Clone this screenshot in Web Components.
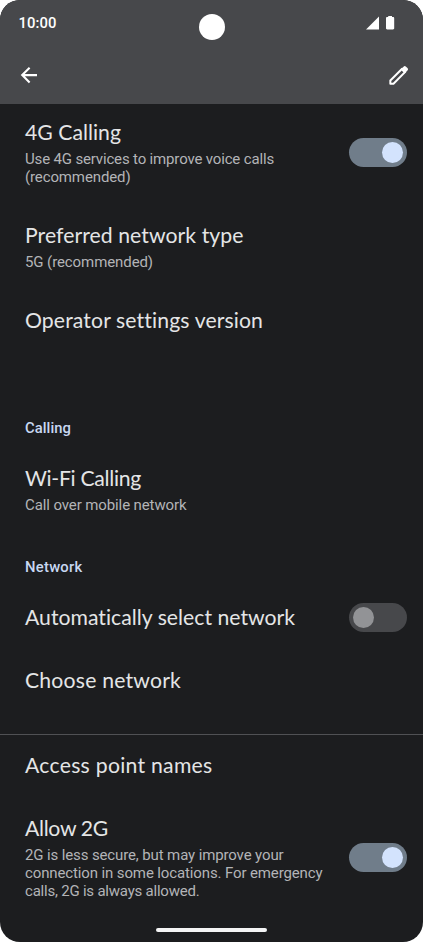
<!DOCTYPE html>
<html lang="en">
<head>
<meta charset="utf-8">
<title>Mobile network</title>
<style>
html,body{margin:0;background:#fff}
</style>
</head>
<body>
<phone-screen>
  <status-bar slot="top"></status-bar>
  <app-bar slot="top"></app-bar>
  <setting-item toggle="on"><fit-text w="96">4G Calling</fit-text>
    <fit-text slot="note" w="249">Use 4G services to improve voice calls</fit-text><fit-text slot="note" w="105.5">(recommended)</fit-text></setting-item>
  <setting-item><fit-text w="218.5">Preferred network type</fit-text><fit-text slot="note" w="128">5G (recommended)</fit-text></setting-item>
  <setting-item><fit-text w="237.5">Operator settings version</fit-text></setting-item>
  <section-label style="height:95px"><fit-text w="46">Calling</fit-text></section-label>
  <setting-item><fit-text w="116">Wi-Fi Calling</fit-text><fit-text slot="note" w="161.5">Call over mobile network</fit-text></setting-item>
  <section-label style="height:54.1px"><fit-text w="57.5">Network</fit-text></section-label>
  <setting-item toggle="off"><fit-text w="270.5">Automatically select network</fit-text></setting-item>
  <setting-item><fit-text w="156">Choose network</fit-text></setting-item>
  <list-divider></list-divider>
  <setting-item><fit-text w="187.5">Access point names</fit-text></setting-item>
  <setting-item toggle="on"><fit-text w="83">Allow 2G</fit-text>
    <fit-text slot="note" w="258.5">2G is less secure, but may improve your</fit-text><fit-text slot="note" w="297.5">connection in some locations. For emergency</fit-text><fit-text slot="note" w="174.5">calls, 2G is always allowed.</fit-text></setting-item>
</phone-screen>
<script>
const define = (name, html, init) => customElements.define(name, class extends HTMLElement {
  constructor() {
    super();
    this.attachShadow({mode: 'open'}).innerHTML = html;
  }
  connectedCallback() { if (init) init(this); }
});

define('phone-screen', `<style>
:host{display:flex;flex-direction:column;position:relative;width:423px;height:942px;overflow:hidden;background:#1c1d1f;border-radius:20px;box-sizing:border-box;font-family:Lato,"Open Sans",sans-serif}
header{flex:none;height:104px;background:#47484b;position:relative;z-index:1}
main{flex:1;min-height:0;margin-top:-3px;display:flex;flex-direction:column}
.home{position:absolute;left:156px;bottom:10.5px;width:111px;height:4px;border-radius:2px;background:#f4f4f5}
</style><header><slot name="top"></slot></header><main><slot></slot></main><div class="home"></div>`);

define('status-bar', `<style>
:host{display:flex;position:relative;height:46px;padding:0 28px 0 18.5px;justify-content:space-between;align-items:center;color:#fff}
fit-text{font:500 14.8px/20px Roboto,sans-serif}
.cam{position:absolute;left:198.5px;top:14px;width:26px;height:26px;border-radius:50%;background:#fff}
svg{display:block}
</style><fit-text w="38">10:00</fit-text><div class="cam"></div>
<svg width="29" height="14" viewBox="0 0 29 14" fill="#fff"><path d="M0 13.4 13 .4v13z"/><path d="M22.2 0h3.8v1.1h1c.7 0 1.2.5 1.2 1.2v9.9c0 .7-.5 1.2-1.2 1.2h-5.8c-.7 0-1.2-.5-1.2-1.2V2.300c0-.7.5-1.200 1.200-1.200h1z"/></svg>`);

define('app-bar', `<style>
:host{display:flex;height:58px;padding:0 15px 0 20px;justify-content:space-between;align-items:center}
svg{display:block}
</style>
<svg width="18" height="18" viewBox="0 0 18 18" fill="none" stroke="#fff" stroke-width="2.1"><path d="M17 9.100H2.500M9.600 1.700 2.200 9.100l7.400 7.400"/></svg>
<svg width="19" height="19" viewBox="0 0 20 20" fill="none" stroke="#fff" stroke-width="2.1"><path stroke-linejoin="round" d="M1.400 15.300 13.800 2.900l3.300 3.300L4.700 18.600H1.400z"/><path fill="#fff" stroke="none" d="m12.300 3.700 3-3a1.900 1.900 0 0 1 2.600 0l1.500 1.500a1.900 1.900 0 0 1 0 2.600l-3 3z"/></svg>`);

define('setting-item', `<style>
:host{display:flex;flex:none;align-items:center;justify-content:space-between;padding:18px 16px 18px 25px;color:#e4e5e6}
.title{font-size:21.2px;line-height:27px;height:27px}
.notes{display:flex;flex-direction:column;padding-top:4px;margin-bottom:-.7px;font:15px/18.4px Roboto,sans-serif;color:#b3b4b7}
.notes[hidden]{display:none}
</style><div><div class="title"><slot></slot></div><div class="notes"><slot name="note"></slot></div></div>`, el => {
  el.shadowRoot.querySelector('.notes').hidden = !el.querySelector('[slot=note]');
  if (el.hasAttribute('toggle')) {
    const t = document.createElement('toggle-switch');
    if (el.getAttribute('toggle') === 'on') t.setAttribute('on', '');
    el.shadowRoot.append(t);
  }
});

define('toggle-switch', `<style>
:host{display:flex;flex:none;box-sizing:border-box;width:58px;height:29px;padding:4px;border-radius:15px;background:#47484b;margin:-1px 0}
:host([on]){background:#707d8a;justify-content:flex-end}
i{width:21px;height:21px;border-radius:50%;background:#929396}
:host([on]) i{background:#d3e3fd}
</style><i></i>`);

define('section-label', `<style>
:host{display:flex;flex:none;align-items:flex-end;box-sizing:border-box;padding:0 25px 9px;color:#c8d8f2;font:500 14.8px/20px Roboto,sans-serif}
</style><slot></slot>`);

define('list-divider', `<style>
:host{display:block;flex:none;height:1px;margin:22px 0 -1px;background:#505154}
</style>`);

// Adjusts letter spacing so that a line takes the given width.
define('fit-text', `<style>
:host{display:block;white-space:pre;width:max-content}
span{display:inline-block}
</style><span><slot></slot></span>`, el => requestAnimationFrame(() => fit(el)));

function fit(el) {
  const span = el.shadowRoot.querySelector('span');
  const n = el.textContent.length;
  span.style.letterSpacing = '0px';
  const gap = (parseFloat(el.getAttribute('w')) - span.getBoundingClientRect().width) / n;
  span.style.letterSpacing = gap.toFixed(3) + 'px';
}
</script>
</body>
</html>
